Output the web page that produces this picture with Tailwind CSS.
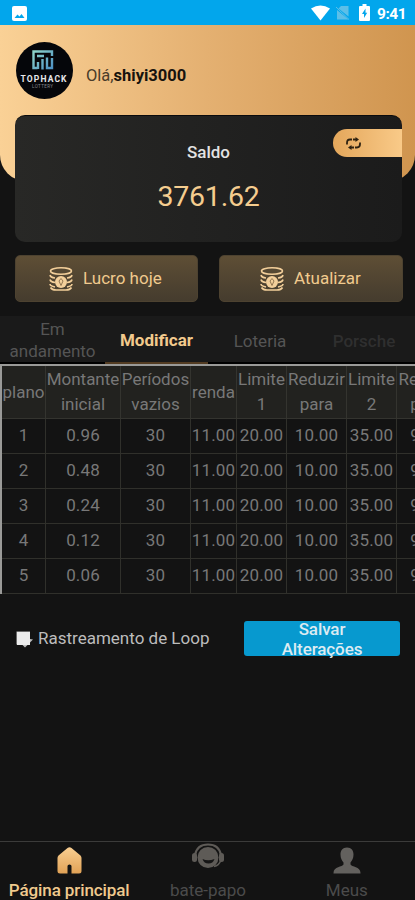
<!DOCTYPE html>
<html lang="pt-BR">
<head>
  <meta charset="UTF-8" />
  <meta name="viewport" content="width=device-width, initial-scale=1.0" />
  <title>Página principal</title>
  <script src="https://cdn.jsdelivr.net/npm/@tailwindcss/browser@4"></script>
</head>
<body class="bg-[#131313] font-['Roboto',sans-serif]">
  <div class="w-[415px] h-[900px] flex flex-col overflow-hidden">

    <!-- Status bar -->
    <div class="h-[25px] shrink-0 bg-[#02a6ec] flex items-center pl-3 pr-[8px] text-white">
      <svg class="mt-px w-[15px] h-[15px]" viewBox="0 0 15 15">
        <rect width="15" height="15" rx="2" fill="#fff" />
        <path d="M2.5 12 L5.5 8.5 L7.5 10.5 L9.5 8 L12.5 12 Z" fill="#02a6ec" />
      </svg>
      <svg class="ml-auto w-[19px] h-[16px]" viewBox="0 0 19 16">
        <path d="M0 3.5 Q9.5 -2.5 19 3.5 L9.5 15.5 Z" fill="#fff" />
      </svg>
      <svg class="ml-[5px] w-[15px] h-[15px]" viewBox="0 0 15 15">
        <path d="M2 5 L13.500 14.500 H2 Z M6 1 H13.500 V11.500 L3.500 3.500 Z" fill="#5cbfe8" />
        <path d="M1 2 L14 14.500" stroke="#5cbfe8" stroke-width="1" />
      </svg>
      <svg class="ml-[9px] w-[11px] h-[17px]" viewBox="0 0 11 17">
        <path d="M3.500 0 H7.500 V2 H10 Q11 2 11 3 V16 Q11 17 10 17 H1 Q0 17 0 16 V3 Q0 2 1 2 H3.500 Z" fill="#fff" />
        <path d="M6.500 4.500 L3 10 H5 V14 L8.200 8.800 H6.500 Z" fill="#02a6ec" />
      </svg>
      <span class="ml-[7px] mt-[3px] w-[30px] whitespace-nowrap text-[15.500px] leading-5 font-bold tracking-[-0.45px]">9:41</span>
    </div>

    <div class="relative isolate shrink-0">
      <!-- Gold backdrop -->
      <div class="absolute -z-10 inset-x-0 top-0 h-[156px] rounded-b-[26px] bg-linear-to-r from-[#fad196] via-[#e4b071] to-[#d0954f]"></div>

      <!-- Greeting -->
      <div class="h-[90px] flex items-center pl-4">
        <svg class="w-[57px] h-[57px]" viewBox="0 0 57 57">
          <defs>
            <linearGradient id="logo" x1="0" y1="0" x2="1" y2="1">
              <stop offset="0" stop-color="#8ed5c9" />
              <stop offset="1" stop-color="#4c8fc4" />
            </linearGradient>
          </defs>
          <circle cx="28.500" cy="28.500" r="28.500" fill="#05060a" />
          <path d="M21.500 26 H17.500 V9.500 H36 V14 M21 14 H28 M26.500 17 V27.500 M22 20 V27 M31 15.500 V26 H36 V16" fill="none" stroke="url(#logo)" stroke-width="2.400" />
          <text x="27.500" y="39.500" text-anchor="middle" textLength="46" font-size="8.500" font-weight="700" fill="#e8e8ea">TOPHACK</text>
          <text x="26.500" y="46" text-anchor="middle" textLength="21" font-size="4.500" fill="#85868c">LOTTERY</text>
        </svg>
        <p class="ml-[13px] mt-[12px] text-[16.500px] leading-5 text-[#4a3c2a]">Olá,<b class="text-[#17130e]">shiyi3000</b></p>
      </div>

      <!-- Balance -->
      <div class="ml-[15px] w-[387px] h-[127px] rounded-[10px] border-t border-[#0b0b0d] bg-linear-to-r from-[#282826] to-[#1b1b1b] flex flex-col">
        <div class="h-[46px] grid grid-cols-[1fr_auto_1fr] pt-[13px]">
          <h2 class="col-start-2 mt-[13px] text-[17px] leading-5 font-medium text-[#e3e3e3]">Saldo</h2>
          <button class="justify-self-end w-[69px] h-7 rounded-l-full bg-linear-to-r from-[#e4a75b] to-[#f9ca88] flex items-center pl-3">
            <svg class="w-[17px] h-[15px]" viewBox="0 0 17 15" fill="none" stroke="#2e2211" stroke-width="1.800">
              <path d="M2 8.500 V7 Q2 3.500 5 3.500 H7 M8 3.500 H11 M15 6.500 V8 Q15 11.500 12 11.500 H10 M9 11.500 H6" />
              <path d="M10.500 1 L14 3.500 L10.500 6 Z M6.500 9 L3 11.500 L6.500 14 Z" fill="#2e2211" stroke="none" />
            </svg>
          </button>
        </div>
        <p class="mt-[17px] text-center text-[28.500px] leading-[36px] tracking-[-0.2px] text-[#f5cd8f]">3761.62</p>
      </div>

      <!-- Actions -->
      <div class="mt-[13px] ml-[15px] flex gap-[21px]">
        <button class="w-[183px] h-[47px] rounded-[5px] border border-[#4d4230] bg-linear-to-b from-[#5e4e35] to-[#453c2e] flex items-center pl-[33px] text-[17px] text-[#f0ca8e]">
          <svg class="w-[24px] h-[24px] mt-px mr-[10px]" viewBox="0 0 24 24" fill="none" stroke="#f3cf9a" stroke-width="1.600">
            <ellipse cx="12" cy="4" rx="10.500" ry="3.200" />
            <path d="M1 8 Q1.500 10.500 6 11 M23 8 Q22.500 10.500 18 11 M1 12.500 Q1.500 15 6 15.500 M23 12.500 Q22.500 15 18 15.500 M1 17 Q1 19 6 20 M23 17 Q23 19 18 20 M1.500 20.500 Q3 23 7 23 H17 Q21 23 22.500 20.500" />
            <circle cx="12" cy="15" r="6" fill="#f3cf9a" stroke="none" />
            <path d="M12 11.500 L14 14 L12 18.500 L10 14 Z" stroke="#927650" stroke-width="1" />
          </svg>
          <span class="whitespace-nowrap">Lucro hoje</span>
        </button>
        <button class="w-[184px] h-[47px] rounded-[5px] border border-[#4d4230] bg-linear-to-b from-[#5e4e35] to-[#453c2e] flex items-center pl-[40px] text-[17px] text-[#f0ca8e]">
          <svg class="w-[24px] h-[24px] mt-px mr-[10px]" viewBox="0 0 24 24" fill="none" stroke="#f3cf9a" stroke-width="1.600">
            <ellipse cx="12" cy="4" rx="10.500" ry="3.200" />
            <path d="M1 8 Q1.500 10.500 6 11 M23 8 Q22.500 10.500 18 11 M1 12.500 Q1.500 15 6 15.500 M23 12.500 Q22.500 15 18 15.500 M1 17 Q1 19 6 20 M23 17 Q23 19 18 20 M1.500 20.500 Q3 23 7 23 H17 Q21 23 22.500 20.500" />
            <circle cx="12" cy="15" r="6" fill="#f3cf9a" stroke="none" />
            <path d="M12 11.500 L14 14 L12 18.500 L10 14 Z" stroke="#927650" stroke-width="1" />
          </svg>
          <span class="whitespace-nowrap">Atualizar</span>
        </button>
      </div>
    </div>

    <!-- Tabs -->
    <div class="mt-[14px] h-[48px] shrink-0 grid grid-cols-[105px_103px_104px_103px] border-b-2 border-black bg-[#1a1a1a] text-center text-[17px] leading-[22px] text-[#555]">
      <div class="pt-[2px]">Em andamento</div>
      <div class="h-[48px] flex items-center justify-center pt-[2px] border-b-2 border-[#533c22] font-bold text-[#f2ca8d]">Modificar</div>
      <div class="flex items-center justify-center pt-px">Loteria</div>
      <div class="flex items-center justify-center pt-px pl-px font-medium text-[#2f2f2f]">Porsche</div>
    </div>

    <!-- Plan table -->
    <div class="shrink-0 overflow-hidden border-t-2 border-l-2 border-[#9a9a98]">
      <table class="w-[456px] table-fixed border-separate border-spacing-0 text-center text-[17px] text-[#787878] [&_td]:h-[35px] [&_td]:p-0 [&_td]:border-r [&_td]:border-b [&_td]:border-[#30302b] [&_th]:h-[53px] [&_th]:p-0 [&_th]:border-r [&_th]:border-b [&_th]:border-[#34342f] [&_th]:bg-[#22221f] [&_th]:font-normal [&_th]:leading-[25px]">
        <colgroup>
          <col class="w-[44px]" />
          <col class="w-[75px]" />
          <col class="w-[70px]" />
          <col class="w-[46px]" />
          <col class="w-[50px]" />
          <col class="w-[60px]" />
          <col class="w-[50px]" />
          <col class="w-[61px]" />
        </colgroup>
        <thead>
          <tr>
            <th>plano</th>
            <th>Montante inicial</th>
            <th>Períodos vazios</th>
            <th>renda</th>
            <th>Limite<br />1</th>
            <th>Reduzir para</th>
            <th>Limite<br />2</th>
            <th>Reduzir para</th>
          </tr>
        </thead>
        <tbody class="tracking-[0.15px]">
          <tr><td>1</td><td>0.96</td><td>30</td><td>11.00</td><td>20.00</td><td>10.00</td><td>35.00</td><td>9.00</td></tr>
          <tr><td>2</td><td>0.48</td><td>30</td><td>11.00</td><td>20.00</td><td>10.00</td><td>35.00</td><td>9.00</td></tr>
          <tr><td>3</td><td>0.24</td><td>30</td><td>11.00</td><td>20.00</td><td>10.00</td><td>35.00</td><td>9.00</td></tr>
          <tr><td>4</td><td>0.12</td><td>30</td><td>11.00</td><td>20.00</td><td>10.00</td><td>35.00</td><td>9.00</td></tr>
          <tr><td>5</td><td>0.06</td><td>30</td><td>11.00</td><td>20.00</td><td>10.00</td><td>35.00</td><td>9.00</td></tr>
        </tbody>
      </table>
    </div>

    <!-- Loop tracking -->
    <div class="mt-[27px] h-[35px] shrink-0 flex items-center pl-4 pr-[15px]">
      <svg class="w-[17px] h-[18px] mt-[3px]" viewBox="0 0 17 18">
        <path d="M0.500 0.500 H14 V8 L17 8.500 L9 16.500 L6 13.500 H0.500 Z" fill="#bdbdbd" />
        <rect x="1" y="1" width="13" height="13" fill="#ececec" />
      </svg>
      <span class="ml-[5px] text-[17px] whitespace-nowrap text-[#bdbdbd]">Rastreamento de Loop</span>
      <button class="ml-auto w-[156px] h-[35px] rounded-[3px] bg-[#0799cf] flex items-center justify-center text-[17px] leading-[20px] font-medium tracking-[-0.1px] text-[#dcebf2]">Salvar<br />Alterações</button>
    </div>

    <!-- Bottom navigation -->
    <div class="mt-auto h-[59px] shrink-0 grid grid-cols-3 border-t border-[#3b3b3a] text-[17px] leading-5 text-[#4b4b4b]">
      <div class="flex flex-col items-center text-[#f0ca8e]">
        <svg class="mt-[5px] w-[25px] h-[27px]" viewBox="0 0 25 27">
          <defs>
            <linearGradient id="home" x1="0" y1="0" x2="0" y2="1">
              <stop offset="0" stop-color="#f9cf92" />
              <stop offset="1" stop-color="#e1a256" />
            </linearGradient>
          </defs>
          <path d="M10.500 1 Q12.500 -0.500 14.500 1 L23.500 8.500 Q24.500 9.500 24.500 11 V24 Q24.500 26.500 22 26.500 H14.500 V19 Q14.500 17.500 12.500 17.500 Q10.500 17.500 10.500 19 V26.500 H3 Q0.500 26.500 0.500 24 V11 Q0.500 9.500 1.500 8.500 Z" fill="url(#home)" />
        </svg>
        <span class="mt-[6px] font-medium tracking-[-0.1px]">Página principal</span>
      </div>
      <div class="flex flex-col items-center">
        <svg class="mt-px ml-[2px] w-[34px] h-[27px]" viewBox="0 0 34 27">
          <path d="M4 12 Q6 1.500 17 1.500 Q28 1.500 30 12" fill="none" stroke="#5e5b57" stroke-width="2.200" />
          <rect x="1" y="10" width="5" height="9" rx="2.500" fill="#5e5b57" />
          <rect x="28" y="10" width="5" height="9" rx="2.500" fill="#5e5b57" />
          <circle cx="17" cy="14.500" r="10.500" fill="#5e5b57" />
          <path d="M11.500 16 Q17 18.500 23.500 16 Q22 20.500 17.500 20.500 Q13 20.500 11.500 16 Z" fill="#151515" />
          <path d="M29.500 18 Q28 22.500 23 23.500" fill="none" stroke="#5e5b57" stroke-width="1.500" />
        </svg>
        <span class="mt-[10px] ml-px">bate-papo</span>
      </div>
      <div class="flex flex-col items-center">
        <svg class="mt-[5px] ml-[2px] w-[28px] h-[27px]" viewBox="0 0 28 27">
          <path d="M14 0.500 C18.500 0.500 20.500 3.500 20.500 7.500 C20.500 11.500 19 13.500 17.500 15.500 V17.500 C18.500 20 27.500 19.500 27.500 26 V26.500 H0.500 V26 C0.500 19.500 9.500 20 10.500 17.500 V15.500 C9 13.500 7.500 11.500 7.500 7.500 C7.500 3.500 9.500 0.500 14 0.500 Z" fill="#63615e" />
        </svg>
        <span class="mt-[6px] ml-[2px]">Meus</span>
      </div>
    </div>

  </div>
</body>
</html>
